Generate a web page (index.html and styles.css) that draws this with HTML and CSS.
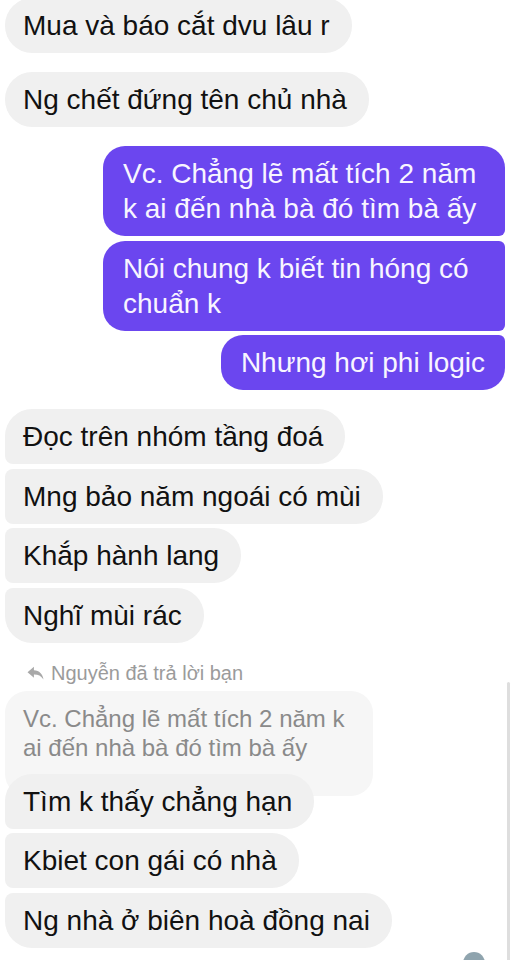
FILE: index.html
```html
<!DOCTYPE html>
<html lang="vi">
<head>
<meta charset="utf-8">
<title>Chat</title>
<link rel="stylesheet" href="styles.css">
</head>
<body>
<div class="chat">
  <div class="group in first-group">
    <div class="msg in solo">Mua và báo cắt dvu lâu r</div>
  </div>
  <div class="group in">
    <div class="msg in solo">Ng chết đứng tên chủ nhà</div>
  </div>
  <div class="group out">
    <div class="msg out top">Vc. Chẳng lẽ mất tích 2 năm k ai đến nhà bà đó tìm bà ấy</div>
    <div class="msg out mid">Nói chung k biết tin hóng có chuẩn k</div>
    <div class="msg out bottom">Nhưng hơi phi logic</div>
  </div>
  <div class="group in">
    <div class="msg in top">Đọc trên nhóm tầng đoá</div>
    <div class="msg in mid">Mng bảo năm ngoái có mùi</div>
    <div class="msg in mid">Khắp hành lang</div>
    <div class="msg in bottom">Nghĩ mùi rác</div>
  </div>
  <div class="group in reply-group">
    <div class="reply-head">
      <svg class="reply-icon" viewBox="0 0 16 13" width="17" height="14" aria-hidden="true">
        <path d="M6.5 0.5 L0.5 5.8 L6.5 11 V7.8 C10.3 7.7 13.2 8.9 15.5 12.5 C14.8 7.6 11.6 4.2 6.5 4 Z" fill="#a9a9a9"/>
      </svg>
      <span>Nguyễn đã trả lời bạn</span>
    </div>
    <div class="quote">Vc. Chẳng lẽ mất tích 2 năm k ai đến nhà bà đó tìm bà ấy</div>
    <div class="msg in top after-quote">Tìm k thấy chẳng hạn</div>
    <div class="msg in mid">Kbiet con gái có nhà</div>
    <div class="msg in bottom">Ng nhà ở biên hoà đồng nai</div>
  </div>
</div>
<div class="scrollbar"></div>
<div class="seen-avatar"></div>
</body>
</html>
```

FILE: styles.css
```css
html, body {
  margin: 0;
  padding: 0;
  background: #ffffff;
}

body {
  width: 516px;
  height: 960px;
  overflow: hidden;
  position: relative;
  font-family: "Liberation Sans", Arial, sans-serif;
  -webkit-font-smoothing: antialiased;
}

.chat {
  display: flex;
  flex-direction: column;
  padding: 0 11px 0 5px;
}

.group {
  display: flex;
  flex-direction: column;
  gap: 4.5px;
  margin-top: 19px;
}

.group.first-group {
  margin-top: -2px;
}

.group.in {
  align-items: flex-start;
}

.group.out {
  align-items: flex-end;
}

.msg {
  box-sizing: border-box;
  max-width: 402px;
  font-size: 28px;
  line-height: 35px;
  padding: 10px 22px 10px 18px;
  border-radius: 27px;
}

.msg.in {
  background: #f0f0f0;
  color: #111111;
}

.msg.out {
  background: #6b46ef;
  color: #f8f5ff;
  padding: 10px 20px 10px 20px;
  border-radius: 22px;
}

.msg.in.top {
  border-bottom-left-radius: 8px;
}

.msg.in.mid {
  border-top-left-radius: 8px;
  border-bottom-left-radius: 8px;
}

.msg.in.bottom {
  border-top-left-radius: 8px;
}

.msg.out.top {
  border-bottom-right-radius: 6px;
}

.msg.out.mid {
  border-top-right-radius: 6px;
  border-bottom-right-radius: 6px;
}

.msg.out.bottom {
  border-top-right-radius: 6px;
}

.reply-group {
  margin-top: 18px;
  gap: 4.5px;
}

.reply-head {
  display: flex;
  align-items: center;
  gap: 7px;
  padding-left: 22px;
  font-size: 20px;
  line-height: 24px;
  color: #9b9b9b;
  margin-bottom: 2px;
}

.reply-icon {
  display: block;
  margin-top: 1px;
}

.quote {
  box-sizing: border-box;
  max-width: 368px;
  background: #f6f6f6;
  color: #8a8a8a;
  font-size: 24px;
  line-height: 28.5px;
  padding: 14px 18px 34px 18px;
  border-radius: 22px;
}

.msg.after-quote {
  margin-top: -27px;
  position: relative;
}

.scrollbar {
  position: absolute;
  left: 507px;
  top: 682px;
  width: 3px;
  height: 290px;
  background: #dedede;
  border-radius: 2px;
}

.seen-avatar {
  position: absolute;
  left: 463px;
  top: 952px;
  width: 22px;
  height: 22px;
  border-radius: 50%;
  background: #8fa4ae;
}
```
